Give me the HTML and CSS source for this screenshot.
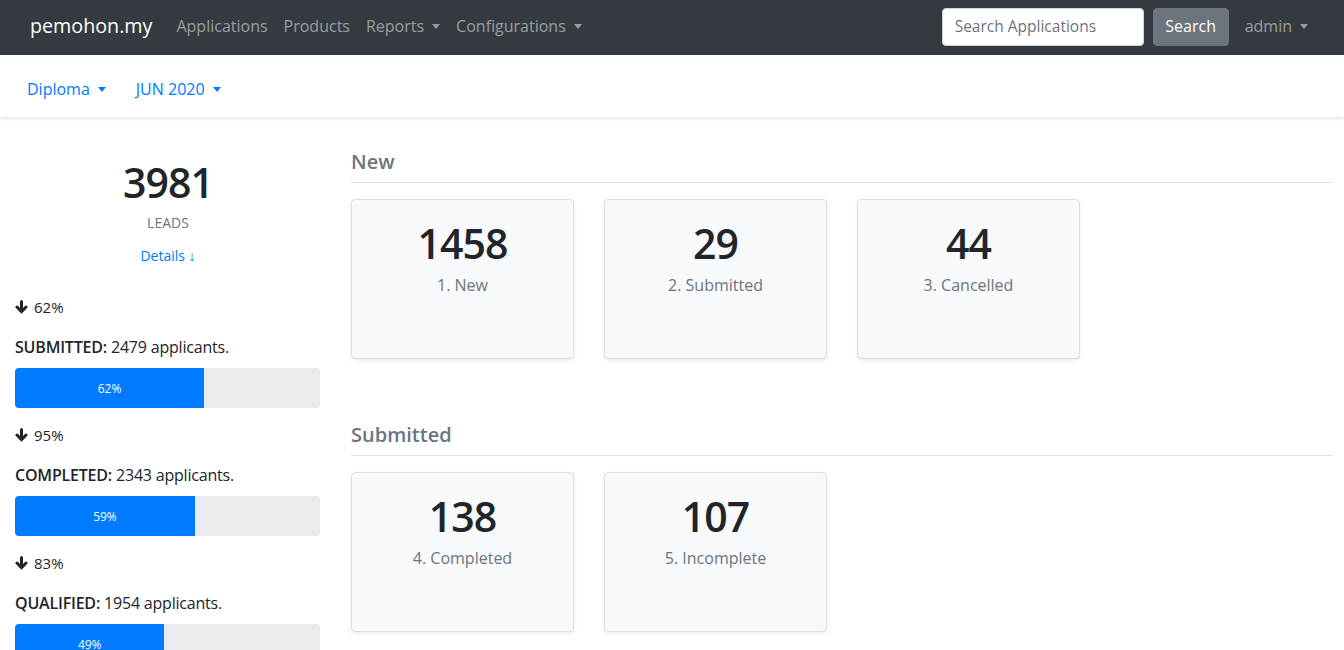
FILE: index.html
```html
<!DOCTYPE html>
<html lang="en">
<head>
<meta charset="utf-8">
<title>pemohon.my</title>
<link rel="stylesheet" href="styles.css">
</head>
<body>
<nav class="topbar">
  <a class="brand" href="#">pemohon.my</a>
  <ul class="nav">
    <li><a href="#">Applications</a></li>
    <li><a href="#">Products</a></li>
    <li><a href="#" class="toggle">Reports</a></li>
    <li><a href="#" class="toggle">Configurations</a></li>
  </ul>
  <form class="search">
    <input type="text" placeholder="Search Applications">
    <button type="button">Search</button>
  </form>
  <a href="#" class="toggle user">admin</a>
</nav>
<div class="subbar">
  <a href="#" class="toggle">Diploma</a>
  <a href="#" class="toggle">JUN 2020</a>
</div>
<main class="main">
  <aside class="left">
    <div class="total">
      <div class="total-num">3981</div>
      <div class="total-label">LEADS</div>
      <a href="#" class="details">Details ↓</a>
    </div>
    <div class="step">
      <div class="drop"><svg viewBox="0 0 13 14" class="arrow"><path d="M6.5 1.5V11.5M2 7L6.5 11.8L11 7"/></svg>62%</div>
      <div class="stage"><span class="stage-name">SUBMITTED:</span> 2479 applicants.</div>
      <div class="bar"><div class="fill" style="width:62%">62%</div></div>
    </div>
    <div class="step">
      <div class="drop"><svg viewBox="0 0 13 14" class="arrow"><path d="M6.5 1.5V11.5M2 7L6.5 11.8L11 7"/></svg>95%</div>
      <div class="stage"><span class="stage-name">COMPLETED:</span> 2343 applicants.</div>
      <div class="bar"><div class="fill" style="width:59%">59%</div></div>
    </div>
    <div class="step">
      <div class="drop"><svg viewBox="0 0 13 14" class="arrow"><path d="M6.5 1.5V11.5M2 7L6.5 11.8L11 7"/></svg>83%</div>
      <div class="stage"><span class="stage-name">QUALIFIED:</span> 1954 applicants.</div>
      <div class="bar"><div class="fill" style="width:49%">49%</div></div>
    </div>
  </aside>
  <section class="right">
    <div class="group">
      <h5 class="group-title">New</h5>
      <div class="cards">
        <div class="card"><div class="card-num">1458</div><div class="card-label">1. New</div></div>
        <div class="card"><div class="card-num">29</div><div class="card-label">2. Submitted</div></div>
        <div class="card"><div class="card-num">44</div><div class="card-label">3. Cancelled</div></div>
      </div>
    </div>
    <div class="group">
      <h5 class="group-title">Submitted</h5>
      <div class="cards">
        <div class="card"><div class="card-num">138</div><div class="card-label">4. Completed</div></div>
        <div class="card"><div class="card-num">107</div><div class="card-label">5. Incomplete</div></div>
      </div>
    </div>
  </section>
</main>
</body>
</html>
```
FILE: styles.css
```css
* { box-sizing: border-box; }
html, body { margin: 0; padding: 0; }
body {
  font-family: "Open Sans", "Liberation Sans", sans-serif;
  font-size: 15px;
  color: #212529;
  background: #fff;
  overflow: hidden;
}
a { text-decoration: none; }

.toggle::after {
  content: "";
  display: inline-block;
  margin-left: 8px;
  vertical-align: 3px;
  border-top: 5px solid currentColor;
  border-left: 4.5px solid transparent;
  border-right: 4.5px solid transparent;
}

.topbar {
  height: 55px;
  background: #343a40;
  display: flex;
  align-items: center;
  padding: 0 28px 0 30px;
}
.brand {
  color: #fff;
  font-size: 19.7px;
  line-height: 26px;
  margin-right: 16px;
  padding-bottom: 4px;
}
.nav {
  display: flex;
  list-style: none;
  margin: 0;
  padding: 0;
  flex: 1;
}
.nav a, .user {
  display: block;
  color: rgba(255,255,255,.5);
  font-size: 16px;
  line-height: 24px;
  padding: 4px 8px 8px;
}
.search {
  display: flex;
  align-items: center;
  gap: 9px;
  margin-right: 8px;
  padding-bottom: 1px;
}
.search input {
  width: 202px;
  height: 38px;
  border: 1px solid #ced4da;
  border-radius: 4px;
  padding: 0 12px 2px;
  font-family: inherit;
  font-size: 15.5px;
  background: #fff;
}
.search input::placeholder { color: #6c757d; }
.search button {
  height: 38px;
  width: 76px;
  border: 1px solid #6c757d;
  background: #6c757d;
  color: #fff;
  border-radius: 4px;
  font-family: inherit;
  font-size: 16px;
  padding: 0 0 3px;
}

.subbar {
  height: 62px;
  display: flex;
  align-items: center;
  padding: 0 18px;
  box-shadow: 0 2px 3px rgba(0,0,0,.09);
  position: relative;
}
.subbar a {
  color: #007bff;
  font-size: 16px;
  line-height: 24px;
  padding: 12px 9px 6px;
  margin-right: 12px;
}

.main {
  display: flex;
  gap: 30px;
  padding: 24px 11px 0 15px;
}
.left { width: 306px; flex-shrink: 0; }
.right { flex: 1; }

.total {
  text-align: center;
  padding-top: 17px;
}
.total-num {
  font-size: 41px;
  font-weight: 600;
  line-height: 48px;
  letter-spacing: -1px;
}
.total-label {
  margin-top: 6px;
  font-size: 14px;
  line-height: 21px;
  color: #6c757d;
}
.details {
  display: inline-block;
  margin-top: 12px;
  font-size: 14px;
  line-height: 21px;
  color: #007bff;
}

.step { padding-top: 29px; }
.step + .step { padding-top: 15px; }
.drop {
  font-size: 15px;
  line-height: 22px;
  display: flex;
  align-items: center;
  padding-top: 1px;
}
.arrow {
  width: 13px;
  height: 14px;
  margin-right: 6px;
  fill: none;
  stroke: #212529;
  stroke-width: 3;
  stroke-linecap: round;
  stroke-linejoin: round;
}
.stage {
  margin-top: 18px;
  font-size: 16px;
  line-height: 22px;
  letter-spacing: -0.2px;
}
.stage-name { font-weight: 600; }
.bar {
  margin-top: 10px;
  width: 305px;
  height: 40px;
  background: #e9ecef;
  border-radius: 4px;
  overflow: hidden;
  display: flex;
}
.fill {
  background: #007bff;
  color: #fff;
  font-size: 12px;
  display: flex;
  align-items: center;
  justify-content: center;
}

.group { padding-top: 9px; }
.group + .group { padding-top: 64px; }
.group-title {
  margin: 0;
  font-size: 20px;
  font-weight: 600;
  line-height: 24px;
  color: #6c757d;
  padding-bottom: 8px;
  border-bottom: 1px solid #dee2e6;
}
.cards {
  display: flex;
  gap: 30px;
  margin-top: 16px;
}
.card {
  width: 223px;
  height: 160px;
  background: #f8f9fa;
  border: 1px solid #dcdee0;
  border-radius: 4px;
  box-shadow: 0 2px 4px rgba(0,0,0,.075);
  text-align: center;
  padding-top: 19px;
}
.card-num {
  font-size: 41px;
  font-weight: 600;
  line-height: 48px;
  letter-spacing: -1px;
  color: #212529;
}
.card-label {
  margin-top: 6px;
  font-size: 16px;
  line-height: 24px;
  color: #6c757d;
}
```
